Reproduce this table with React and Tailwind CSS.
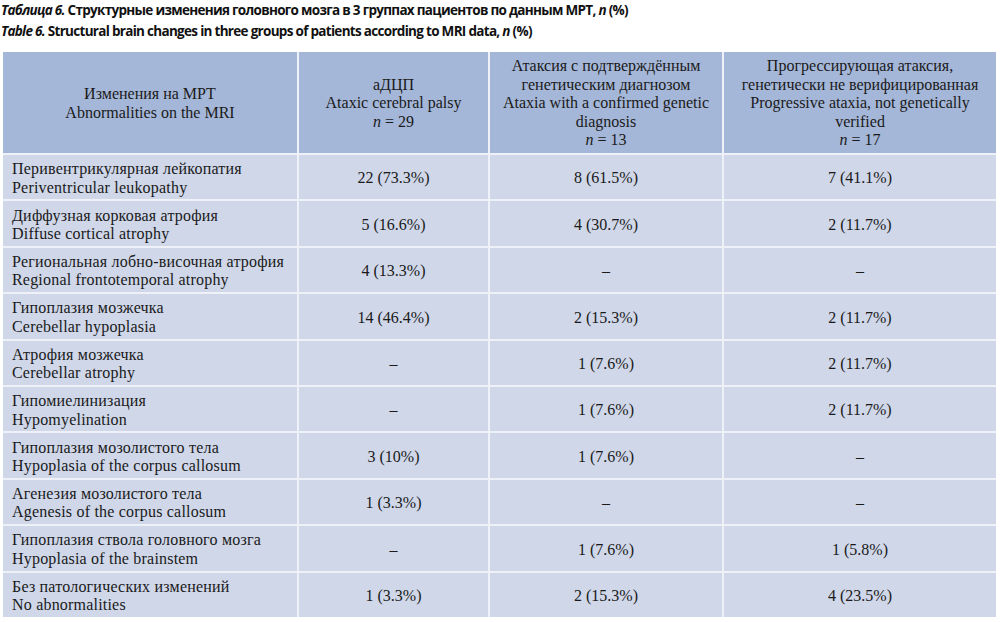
import React from "react";

const rows = [
  ["Перивентрикулярная лейкопатия", "Periventricular leukopathy", "22 (73.3%)", "8 (61.5%)", "7 (41.1%)"],
  ["Диффузная корковая атрофия", "Diffuse cortical atrophy", "5 (16.6%)", "4 (30.7%)", "2 (11.7%)"],
  ["Региональная лобно-височная атрофия", "Regional frontotemporal atrophy", "4 (13.3%)", "–", "–"],
  ["Гипоплазия мозжечка", "Cerebellar hypoplasia", "14 (46.4%)", "2 (15.3%)", "2 (11.7%)"],
  ["Атрофия мозжечка", "Cerebellar atrophy", "–", "1 (7.6%)", "2 (11.7%)"],
  ["Гипомиелинизация", "Hypomyelination", "–", "1 (7.6%)", "2 (11.7%)"],
  ["Гипоплазия мозолистого тела", "Hypoplasia of the corpus callosum", "3 (10%)", "1 (7.6%)", "–"],
  ["Агенезия мозолистого тела", "Agenesis of the corpus callosum", "1 (3.3%)", "–", "–"],
  ["Гипоплазия ствола головного мозга", "Hypoplasia of the brainstem", "–", "1 (7.6%)", "1 (5.8%)"],
  ["Без патологических изменений", "No abnormalities", "1 (3.3%)", "2 (15.3%)", "4 (23.5%)"],
];

export default function App() {
  return (
    <div className="w-[1000px] h-[622px] bg-white overflow-hidden">
      <div className="pl-[1px] pt-0 text-[13.5px] leading-[21px] font-bold text-[#111] tracking-[-0.7px]" style={{ fontFamily: '"Open Sans", "Noto Sans", sans-serif' }}>
        <div><i>Таблица 6.</i> Структурные изменения головного мозга в 3 группах пациентов по данным МРТ, <i>n</i> (%)</div>
        <div><i>Table 6.</i> Structural brain changes in three groups of patients according to MRI data, <i>n</i> (%)</div>
      </div>
      <div
        className="ml-[3px] mt-[10px] w-[993px] grid grid-cols-[294px_189px_232px_272px] gap-[2px] bg-[#eef1f7] text-[16px] leading-[18.5px] text-[#1a1a1a]"
        style={{ fontFamily: '"Liberation Serif", "Times New Roman", serif' }}
      >
        <div className="h-[101px] pt-[2px] bg-[#a5b7d8] flex items-center justify-center text-center">
          <div>Изменения на МРТ<br />Abnormalities on the MRI</div>
        </div>
        <div className="pt-[2px] bg-[#a5b7d8] flex items-center justify-center text-center">
          <div>аДЦП<br />Ataxic cerebral palsy<br /><i>n</i> = 29</div>
        </div>
        <div className="pt-[2px] bg-[#a5b7d8] flex items-center justify-center text-center">
          <div>Атаксия с подтверждённым<br />генетическим диагнозом<br />Ataxia with a confirmed genetic<br />diagnosis<br /><i>n</i> = 13</div>
        </div>
        <div className="pt-[2px] bg-[#a5b7d8] flex items-center justify-center text-center">
          <div>Прогрессирующая атаксия,<br />генетически не верифицированная<br />Progressive ataxia, not genetically<br />verified<br /><i>n</i> = 17</div>
        </div>
        {rows.map((r, i) => (
          <React.Fragment key={i}>
            <div className="h-[44.4px] pt-[3px] bg-[#cfd7e9] flex items-center pl-[9px] tracking-[0.2px]">
              <div>{r[0]}<br />{r[1]}</div>
            </div>
            <div className="pt-[3px] bg-[#cfd7e9] flex items-center justify-center">{r[2]}</div>
            <div className="pt-[3px] bg-[#cfd7e9] flex items-center justify-center">{r[3]}</div>
            <div className="pt-[3px] bg-[#cfd7e9] flex items-center justify-center">{r[4]}</div>
          </React.Fragment>
        ))}
      </div>
    </div>
  );
}
